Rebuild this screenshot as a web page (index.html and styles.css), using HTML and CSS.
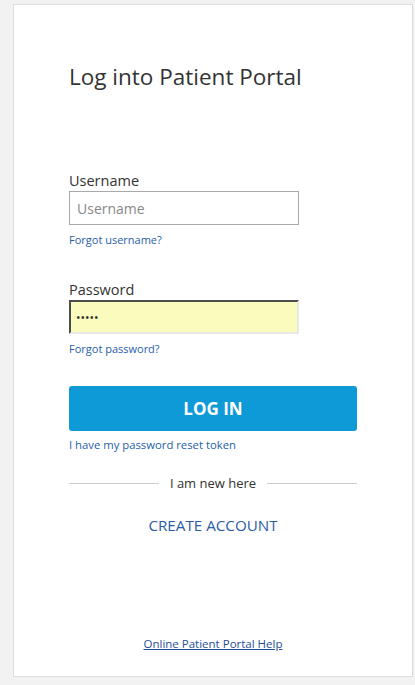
FILE: index.html
```html
<!DOCTYPE html>
<html lang="en">
<head>
<meta charset="utf-8">
<title>Log into Patient Portal</title>
<link rel="stylesheet" href="styles.css">
</head>
<body>
<main class="card">
  <h1 class="title">Log into Patient Portal</h1>
  <form class="form">
    <div class="field">
      <label class="label" for="user">Username</label>
      <input class="input" id="user" type="text" placeholder="Username">
      <a class="small-link" href="#">Forgot username?</a>
    </div>
    <div class="field field-pass">
      <label class="label" for="pass">Password</label>
      <input class="input input-filled" id="pass" type="password" value="12345">
      <a class="small-link" href="#">Forgot password?</a>
    </div>
    <button class="btn" type="button">LOG IN</button>
    <a class="token-link" href="#">I have my password reset token</a>
  </form>
  <div class="divider"><span class="divider-text">I am new here</span></div>
  <a class="create" href="#">CREATE ACCOUNT</a>
  <a class="help" href="#">Online Patient Portal Help</a>
</main>
</body>
</html>
```
FILE: styles.css
```css
* { box-sizing: border-box; }
html, body { margin: 0; padding: 0; }
body {
  background: #f2f2f2;
  font-family: "Open Sans", "Noto Sans", sans-serif;
  color: #333;
  padding: 4px 2px 0 13px;
}
.card {
  width: 400px;
  height: 673px;
  background: #fff;
  border: 1px solid #dddddd;
  padding: 57px 55px 24px 55px;
  display: flex;
  flex-direction: column;
}
.title {
  margin: 0;
  font-weight: 400;
  font-size: 22.5px;
  line-height: 30px;
  color: #333;
}
.form { display: flex; flex-direction: column; margin-top: 79px; }
.field { display: flex; flex-direction: column; }
.field-pass { margin-top: 33px; }
.label {
  font-size: 14.5px;
  line-height: 20px;
  color: #333;
  margin-bottom: 0;
}
.input {
  width: 230px;
  height: 34px;
  border: 1px solid #a9a9a9;
  padding: 0 7px;
  font-family: inherit;
  font-size: 14px;
  color: #333;
  background: #fff;
  outline: none;
}
.input::placeholder { color: #888; }
.input-filled {
  background: #fafcbe;
  border: 2px inset #a0a0a0;
  border-right-color: #e8e8e8;
  border-bottom-color: #e8e8e8;
  padding: 0 5px;
  font-size: 12px;
  letter-spacing: 0;
}
.small-link {
  font-size: 11px;
  line-height: 15px;
  margin-top: 7px;
  color: #1f5ea8;
  text-decoration: none;
  align-self: flex-start;
}
.btn {
  margin-top: 30px;
  height: 45px;
  width: 100%;
  border: 0;
  border-radius: 3px;
  background: #0e9ad6;
  color: #fff;
  font-family: inherit;
  font-weight: 700;
  font-size: 17px;
  cursor: pointer;
}
.token-link {
  margin-top: 6px;
  font-size: 11.3px;
  line-height: 16px;
  color: #1f5ea8;
  text-decoration: none;
  align-self: flex-start;
}
.divider {
  margin-top: 21px;
  display: flex;
  align-items: center;
  gap: 10px;
}
.divider::before, .divider::after {
  content: "";
  flex: 1;
  height: 1px;
  background: #cccccc;
}
.divider-text {
  font-size: 13px;
  line-height: 18px;
  color: #333;
  padding: 0 1px;
}
.create {
  margin-top: 23px;
  align-self: center;
  font-size: 15.2px;
  line-height: 20px;
  color: #2a5ca8;
  text-decoration: none;
}
.help {
  margin-top: auto;
  align-self: center;
  font-size: 11.5px;
  line-height: 16px;
  color: #1f4e98;
  text-decoration: underline;
}
```
